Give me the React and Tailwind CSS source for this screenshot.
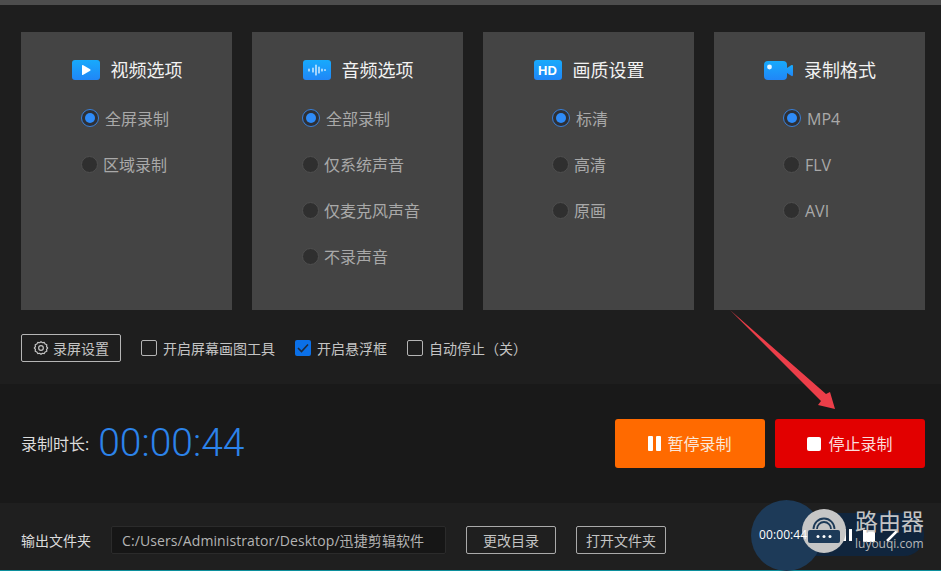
import React from "react";

const font = { fontFamily: '"Open Sans","Noto Sans CJK SC",sans-serif' };

function IconBox({ children }) {
  return (
    <span className="w-[28px] h-[20px] rounded-[3px] bg-gradient-to-b from-[#18aafc] to-[#2086f7] flex items-center justify-center shrink-0">
      {children}
    </span>
  );
}

const VideoIcon = () => (
  <IconBox>
    <svg width="12" height="12" viewBox="0 0 12 12"><path d="M2 1.500 Q2 .8 2.800 1 L10.200 5.200 Q11 6 10.200 6.800 L2.800 11 Q2 11.200 2 10.500Z" fill="#fff" /></svg>
  </IconBox>
);
const AudioIcon = () => (
  <IconBox>
    <svg width="20" height="12" viewBox="0 0 20 12" stroke="#fff" strokeWidth="1.200" strokeLinecap="round">
      <path d="M2 5v2M6 4v4M9 1v10M12 3v6M15 5v2M18 5.500v1" />
    </svg>
  </IconBox>
);
const HdIcon = () => (
  <IconBox>
    <span className="text-white text-[13px] font-bold leading-none" style={{ fontFamily: '"Liberation Sans",sans-serif' }}>HD</span>
  </IconBox>
);
const CamIcon = () => (
  <svg width="29" height="19" viewBox="0 0 29 19" className="shrink-0">
    <defs>
      <linearGradient id="cam" x1="0" y1="0" x2="0" y2="1">
        <stop offset="0" stopColor="#18aafc" />
        <stop offset="1" stopColor="#2086f7" />
      </linearGradient>
    </defs>
    <rect x="0" y="0" width="23" height="19" rx="4" fill="url(#cam)" />
    <path d="M23 7 L27.500 4 Q29 3.500 29 5 V14 Q29 15.500 27.500 15 L23 12Z" fill="url(#cam)" />
    <circle cx="5.500" cy="6" r="2.400" fill="#e8f6ff" />
  </svg>
);

function Radio({ label, on }) {
  return (
    <div className="h-[46px] flex items-center">
      {on ? (
        <span className="w-[18px] h-[18px] rounded-full border border-[#3a80d8] bg-[#2e3036] flex items-center justify-center shrink-0">
          <span className="w-[10px] h-[10px] rounded-full bg-[#2e8bf8]" />
        </span>
      ) : (
        <span className="w-[17px] h-[17px] rounded-full border border-[#4f4f4f] bg-[#2f2f2f] shrink-0" />
      )}
      <span className={on ? "ml-[6px] mt-[1px] text-[16px] text-[#a9a9a9] whitespace-nowrap" : "ml-[5px] mt-[1px] text-[16px] text-[#a9a9a9] whitespace-nowrap"}>{label}</span>
    </div>
  );
}

function Panel({ icon, title, items, pl }) {
  return (
    <div className="w-[211px] h-[278px] bg-[#444444] shrink-0">
      <div className="h-[28px] mt-[24px] flex items-center justify-center">
        {icon}
        <span className="ml-[10px] mt-[1px] translate-x-[1px] text-[18px] text-[#f2f2f2] whitespace-nowrap">{title}</span>
      </div>
      <div className="mt-[11px] flex flex-col" style={{ paddingLeft: pl }}>
        {items.map((t, i) => (
          <Radio key={t} label={t} on={i === 0} />
        ))}
      </div>
    </div>
  );
}

function Check({ label, on }) {
  return (
    <div className="flex items-center">
      {on ? (
        <span className="w-[16px] h-[16px] rounded-[2px] bg-[#0b70e8] flex items-center justify-center">
          <svg width="12" height="10" viewBox="0 0 12 10" fill="none" stroke="#1e2a3c" strokeWidth="1.600"><path d="M1 5l3.500 3.500L11 1.500" /></svg>
        </span>
      ) : (
        <span className="w-[16px] h-[16px] rounded-[2px] border border-[#b5b5b5]" />
      )}
      <span className="ml-[6px] text-[14px] text-[#c4c4c4] whitespace-nowrap">{label}</span>
    </div>
  );
}

export default function App() {
  return (
    <div className="relative w-[941px] h-[571px] overflow-hidden bg-[#1e1e1e]" style={font}>
      <div className="h-[5px] bg-[#4d4d4d]" />
      <div className="h-[379px] pl-[21px] pr-[16px] pt-[27px]">
        <div className="flex gap-[20px]">
          <Panel icon={<VideoIcon />} title="视频选项" items={["全屏录制", "区域录制"]} pl={60} />
          <Panel icon={<AudioIcon />} title="音频选项" items={["全部录制", "仅系统声音", "仅麦克风声音", "不录声音"]} pl={50} />
          <Panel icon={<HdIcon />} title="画质设置" items={["标清", "高清", "原画"]} pl={69} />
          <Panel icon={<CamIcon />} title="录制格式" items={["MP4", "FLV", "AVI"]} pl={69} />
        </div>
        <div className="mt-[24px] flex items-center">
          <div className="w-[100px] h-[28px] rounded-[2px] border border-[#b5b5b5] flex items-center justify-center">
            <svg width="16" height="16" viewBox="0 0 24 24" fill="none" stroke="#c4c4c4" strokeWidth="1.800" strokeLinejoin="round">
              <path d="M12 2.500l2.200 1.600 2.700-.4 1.300 2.400 2.500 1.100-.4 2.700L22 12l-1.700 2.100.4 2.700-2.500 1.100-1.300 2.400-2.700-.4L12 21.500l-2.200-1.600-2.700.4-1.300-2.400-2.500-1.100.4-2.700L2 12l1.700-2.100-.4-2.700 2.500-1.100 1.300-2.400 2.700.4z" />
              <circle cx="12" cy="12" r="3.500" />
            </svg>
            <span className="ml-[4px] text-[14px] text-[#c4c4c4]">录屏设置</span>
          </div>
          <div className="ml-[20px]"><Check label="开启屏幕画图工具" /></div>
          <div className="ml-[20px]"><Check label="开启悬浮框" on /></div>
          <div className="ml-[20px]"><Check label="自动停止（关）" /></div>
        </div>
      </div>
      <div className="h-[119px] bg-[#191919] pl-[21px] pr-[16px] flex items-center justify-between">
        <div className="flex items-center">
          <span className="text-[16px] text-[#dcdcdc] whitespace-nowrap">录制时长:</span>
          <span className="ml-[9px] text-[39px] leading-none text-[#2c83ea] whitespace-nowrap" style={{ fontFamily: 'Roboto,sans-serif', fontWeight: 300 }}>00:00:44</span>
        </div>
        <div className="flex gap-[10px]">
          <div className="w-[150px] h-[49px] rounded-[3px] bg-[#ff6a00] flex items-center justify-center text-[16px] text-[#fbe7d8]">
            <span className="flex gap-[3px] mr-[6px]">
              <span className="w-[5px] h-[15px] rounded-[1px] bg-white" />
              <span className="w-[5px] h-[15px] rounded-[1px] bg-white" />
            </span>
            暂停录制
          </div>
          <div className="w-[150px] h-[49px] rounded-[3px] bg-[#e20000] flex items-center justify-center text-[16px] text-[#fbdcdc]">
            <span className="w-[14px] h-[14px] rounded-[2px] bg-white mr-[7px]" />
            停止录制
          </div>
        </div>
      </div>
      <div className="h-[67px] bg-[#1f1f1f] px-[21px] pt-[23px]">
        <div className="flex items-center">
          <span className="text-[14px] text-[#dcdcdc] w-[90px] whitespace-nowrap">输出文件夹</span>
          <div className="w-[335px] h-[28px] rounded-[2px] border border-[#2b2b2b] bg-[#161616] pl-[10px] flex items-center text-[14px] text-[#b4b4b4] whitespace-nowrap tracking-[0.1px]">
            C:/Users/Administrator/Desktop/迅捷剪辑软件
          </div>
          <div className="ml-[20px] w-[90px] h-[28px] rounded-[2px] border border-[#aaaaaa] flex items-center justify-center text-[14px] text-[#c4c4c4]">更改目录</div>
          <div className="ml-[20px] w-[90px] h-[28px] rounded-[2px] border border-[#aaaaaa] flex items-center justify-center text-[14px] text-[#c4c4c4]">打开文件夹</div>
        </div>
      </div>
      <div className="h-[1px] bg-[#0b8f9c] absolute bottom-0 left-0 right-0" />

      {/* arrow annotation */}
      <svg className="absolute left-[725px] top-[305px]" width="115" height="110" viewBox="0 0 115 110">
        <path d="M5 5 L101 89 L105 87 L110 104 L93 100 L96 96 Z" fill="#ec3e49" />
      </svg>

      {/* floating timer */}
      <div className="absolute left-[800px] top-[513px] w-[124px] h-[43px] rounded-r-[20px] bg-[#10253d]" />
      <div className="absolute left-[751px] top-[500px] w-[71px] h-[71px] rounded-full bg-[#1d3a58]" />
      <span className="absolute left-[843px] top-[529px] flex gap-[3px]">
        <span className="w-[3px] h-[12px] bg-white" />
        <span className="w-[3px] h-[12px] bg-white" />
      </span>
      <span className="absolute left-[863px] top-[530px] w-[12px] h-[12px] bg-white" />
      <svg className="absolute left-[885px] top-[528px]" width="14" height="14" viewBox="0 0 14 14"><path d="M2 13L12 3" stroke="#fff" strokeWidth="2.500" /></svg>

      {/* watermark */}
      <div className="absolute left-[802px] top-[509px] w-[44px] h-[44px] rounded-full bg-[#c6c6c6] flex items-center justify-center">
        <svg width="34" height="30" viewBox="0 0 34 30">
          <path d="M10 13a7 7 0 0 1 14 0M6.500 13a10.500 10.500 0 0 1 21 0" fill="none" stroke="#1d3a58" strokeWidth="1.800" />
          <rect x="1" y="14" width="32" height="13" rx="2" fill="#1d3a58" />
          <circle cx="11" cy="20.500" r="1.500" fill="#fff" /><circle cx="17" cy="20.500" r="1.500" fill="#fff" /><circle cx="23" cy="20.500" r="1.500" fill="#fff" />
        </svg>
      </div>
      <span className="absolute left-[759px] top-[527px] text-[12px] leading-[16px] text-white tracking-[0.1px]">00:00:44</span>
      <span className="absolute left-[855px] top-[505px] text-[23px] leading-[32px] text-[#c4c4c4] whitespace-nowrap">路由器</span>
      <span className="absolute left-[855px] top-[536px] text-[12px] leading-[16px] text-[#b8b8b8] whitespace-nowrap">luyouqi.com</span>
    </div>
  );
}
